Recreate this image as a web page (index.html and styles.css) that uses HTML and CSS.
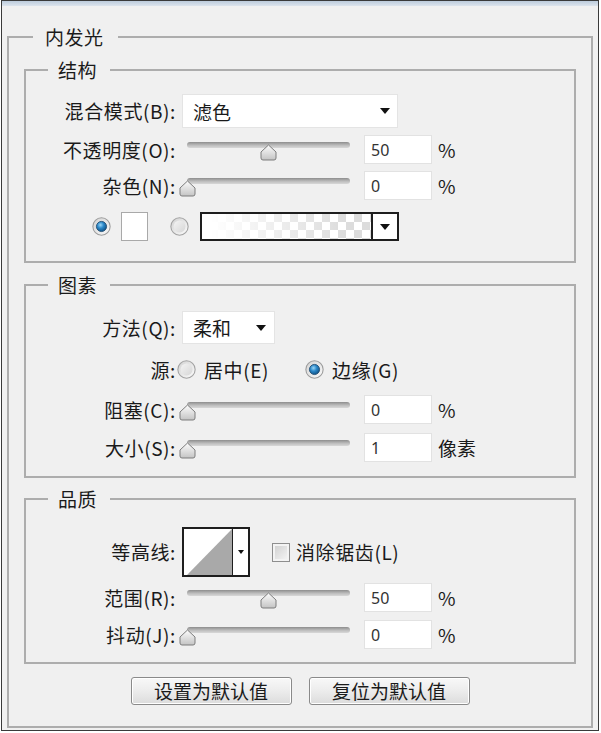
FILE: index.html
```html
<!DOCTYPE html>
<html lang="zh-CN">
<head>
    <meta charset="UTF-8">
    <meta name="viewport" content="width=device-width, initial-scale=1.0">
    <title>内发光</title>
    <link rel="stylesheet" href="styles.css">
</head>
<body>
    <div class="window">
        <div class="title-strip"></div>

        <fieldset class="group outer">
            <legend>内发光</legend>

            <fieldset class="group section structure">
                <legend>结构</legend>
                <div class="rows">
                    <div class="row row-select">
                        <label>混合模式(B):</label>
                        <div class="select select-wide"><span>滤色</span><i class="arrow"></i></div>
                    </div>
                    <div class="row">
                        <label>不透明度(O):</label>
                        <div class="control">
                            <div class="slider"><div class="track"><svg class="thumb" style="left: 50%"><use href="#thumb"/></svg></div></div>
                            <input class="num" type="text" value="50">
                            <span class="unit">%</span>
                        </div>
                    </div>
                    <div class="row">
                        <label>杂色(N):</label>
                        <div class="control">
                            <div class="slider"><div class="track"><svg class="thumb" style="left: 0%"><use href="#thumb"/></svg></div></div>
                            <input class="num" type="text" value="0">
                            <span class="unit">%</span>
                        </div>
                    </div>
                    <div class="swatches">
                        <svg class="radio"><use href="#radio-on"/></svg>
                        <span class="swatch"></span>
                        <svg class="radio radio-gap"><use href="#radio-off"/></svg>
                        <div class="gradient-pick">
                            <span class="gradient"></span>
                            <span class="pick-arrow"><i class="arrow"></i></span>
                        </div>
                    </div>
                </div>
            </fieldset>

            <fieldset class="group section elements">
                <legend>图素</legend>
                <div class="rows">
                    <div class="row row-select">
                        <label>方法(Q):</label>
                        <div class="select select-short"><span>柔和</span><i class="arrow"></i></div>
                    </div>
                    <div class="row row-source">
                        <label>源:</label>
                        <div class="choices">
                            <svg class="radio"><use href="#radio-off"/></svg>
                            <span>居中(E)</span>
                            <svg class="radio radio-far"><use href="#radio-on"/></svg>
                            <span>边缘(G)</span>
                        </div>
                    </div>
                    <div class="row">
                        <label>阻塞(C):</label>
                        <div class="control">
                            <div class="slider"><div class="track"><svg class="thumb" style="left: 0%"><use href="#thumb"/></svg></div></div>
                            <input class="num" type="text" value="0">
                            <span class="unit">%</span>
                        </div>
                    </div>
                    <div class="row">
                        <label>大小(S):</label>
                        <div class="control">
                            <div class="slider"><div class="track"><svg class="thumb" style="left: 0.4%"><use href="#thumb"/></svg></div></div>
                            <input class="num" type="text" value="1">
                            <span class="unit">像素</span>
                        </div>
                    </div>
                </div>
            </fieldset>

            <fieldset class="group section quality">
                <legend>品质</legend>
                <div class="rows">
                    <div class="row row-contour">
                        <label>等高线:</label>
                        <div class="control">
                            <div class="contour">
                                <svg class="curve" viewBox="0 0 48 46"><polygon points="3,46 48,0 48,46" fill="#a9a9a9"/></svg>
                                <span class="contour-arrow"><i class="arrow small"></i></span>
                            </div>
                            <span class="check"></span>
                            <span class="check-label">消除锯齿(L)</span>
                        </div>
                    </div>
                    <div class="row">
                        <label>范围(R):</label>
                        <div class="control">
                            <div class="slider"><div class="track"><svg class="thumb" style="left: 50%"><use href="#thumb"/></svg></div></div>
                            <input class="num" type="text" value="50">
                            <span class="unit">%</span>
                        </div>
                    </div>
                    <div class="row">
                        <label>抖动(J):</label>
                        <div class="control">
                            <div class="slider"><div class="track"><svg class="thumb" style="left: 0%"><use href="#thumb"/></svg></div></div>
                            <input class="num" type="text" value="0">
                            <span class="unit">%</span>
                        </div>
                    </div>
                </div>
            </fieldset>

            <div class="buttons">
                <button class="btn">设置为默认值</button>
                <button class="btn">复位为默认值</button>
            </div>
        </fieldset>

        <svg class="defs" width="0" height="0">
            <defs>
                <linearGradient id="thumb-fill" x1="0" y1="0" x2="0" y2="1">
                    <stop offset="0" stop-color="#fdfdfd"/>
                    <stop offset="1" stop-color="#c4c4c4"/>
                </linearGradient>
                <linearGradient id="ring-fill" x1="0" y1="0" x2="1" y2="1">
                    <stop offset="0" stop-color="#d2d2d2"/>
                    <stop offset="1" stop-color="#fbfbfb"/>
                </linearGradient>
                <linearGradient id="hole-fill" x1="0" y1="0" x2="1" y2="1">
                    <stop offset="0" stop-color="#f4f4f4"/>
                    <stop offset="1" stop-color="#d6d6d6"/>
                </linearGradient>
                <radialGradient id="dot-fill" cx="0.4" cy="0.35" r="0.7">
                    <stop offset="0" stop-color="#9ad6f6"/>
                    <stop offset="0.45" stop-color="#2b88c9"/>
                    <stop offset="1" stop-color="#0e4d80"/>
                </radialGradient>
                <symbol id="thumb" viewBox="0 0 17 17">
                    <path d="M8.5 1 L16 8 V14 Q16 16 14 16 H3 Q1 16 1 14 V8 Z" fill="url(#thumb-fill)" stroke="#7d7d7d"/>
                </symbol>
                <symbol id="radio-on" viewBox="0 0 18 18">
                    <circle cx="9" cy="9" r="8.2" fill="url(#ring-fill)" stroke="#9c9c9c"/>
                    <circle cx="9" cy="9" r="4.8" fill="url(#dot-fill)" stroke="#1d4a70" stroke-width="0.8"/>
                </symbol>
                <symbol id="radio-off" viewBox="0 0 18 18">
                    <circle cx="9" cy="9" r="8.2" fill="url(#ring-fill)" stroke="#a2a2a2"/>
                    <circle cx="9" cy="9" r="5.6" fill="url(#hole-fill)"/>
                </symbol>
            </defs>
        </svg>
    </div>
</body>
</html>
```

FILE: styles.css
```css
* {
    box-sizing: border-box;
}

body {
    margin: 0;
    background: #ffffff;
    font-family: "Noto Sans CJK SC", "Noto Sans", sans-serif;
    font-size: 19px;
    color: #1a1a1a;
}

.window {
    width: 598px;
    height: 731px;
    margin-left: 1px;
    border: 1px solid #3a3a3a;
    background: #f0f0f0;
}

.title-strip {
    height: 5px;
    background: linear-gradient(#bccbdb, #dce4ed);
}

/* group boxes */
.group {
    margin: 0;
    padding: 0;
    border: 2px solid #adadad;
    min-width: 0;
}

.group > legend {
    font-size: 19px;
    line-height: 20px;
    letter-spacing: 0.5px;
    padding: 0 13px 0 10px;
    margin-left: 22px;
}

.outer {
    margin: 21px 5px 0;
    padding: 13px 15px 21px;
}

.outer > legend {
    margin-left: 9px;
    padding: 0 14px 0 12px;
}

.rows {
    display: flex;
    flex-direction: column;
}

.structure .rows {
    gap: 7px;
    padding: 14px 0 20px;
}

.elements {
    margin-top: 12px;
}

.elements .rows {
    gap: 9px;
    padding: 16px 0 14px;
}

.quality {
    margin-top: 11px;
}

.quality .rows {
    gap: 8px;
    padding: 18px 0 13px;
}

/* label + control rows */
.row {
    display: grid;
    grid-template-columns: 150px 1fr;
    column-gap: 6px;
    align-items: center;
    height: 29px;
}

.row > label {
    text-align: right;
    white-space: nowrap;
    line-height: 20px;
    letter-spacing: 0.6px;
}

.row-select {
    height: 34px;
}

.elements .row-select {
    height: 33px;
}

.row-source {
    height: 33px;
}

.row-contour {
    height: 48px;
}

.control {
    display: flex;
    align-items: center;
    height: 100%;
}

/* dropdowns */
.select {
    display: flex;
    align-items: center;
    justify-content: space-between;
    height: 100%;
    padding: 0 7px 0 10px;
    background: #ffffff;
    border: 1px solid #e4e4e4;
}

.select-wide {
    width: 216px;
}

.select-short {
    width: 93px;
    padding-right: 8px;
}

.arrow {
    display: block;
    width: 0;
    height: 0;
    border-left: 5px solid transparent;
    border-right: 5px solid transparent;
    border-top: 6px solid #111;
}

.arrow.small {
    border-left-width: 3.5px;
    border-right-width: 3.5px;
    border-top-width: 4px;
}

/* sliders */
.slider {
    width: 168px;
    height: 100%;
    padding: 7px 0 0 5px;
    margin-right: 14px;
}

.track {
    position: relative;
    height: 6px;
    border-radius: 3px;
    background: linear-gradient(#8d8d8d, #bdbdbd 55%, #d8d8d8);
}

.thumb {
    position: absolute;
    top: 2px;
    width: 17px;
    height: 17px;
    margin-left: -8.5px;
}

.num {
    width: 68px;
    height: 29px;
    margin: 0;
    padding: 0 6px;
    border: 1px solid #e2e2e2;
    background: #ffffff;
    font-family: "Noto Sans", sans-serif;
    font-size: 16px;
    color: #333;
    outline: none;
}

.unit {
    margin-left: 6px;
    font-size: 19px;
    line-height: 20px;
}

/* colour row */
.swatches {
    display: flex;
    align-items: center;
    height: 29px;
    margin-top: 5px;
    padding-left: 66px;
}

.radio {
    width: 19px;
    height: 19px;
    flex: none;
}

.swatch {
    width: 27px;
    height: 29px;
    margin-left: 10px;
    background: #ffffff;
    border: 1px solid #a9a9a9;
}

.radio-gap {
    margin-left: 22px;
}

.gradient-pick {
    display: flex;
    width: 199px;
    height: 29px;
    margin-left: 11px;
    border: 2px solid #1e1e1e;
    background: #ffffff;
}

.gradient {
    flex: 1;
    background:
        linear-gradient(to right, #ffffff 5%, rgba(255, 255, 255, 0.15) 85%),
        repeating-conic-gradient(#d6d6d6 0 25%, #ffffff 0 50%) 0 0 / 16px 16px;
}

.pick-arrow {
    display: flex;
    align-items: center;
    justify-content: center;
    width: 26px;
    border-left: 2px solid #1e1e1e;
}

/* radio choice row */
.choices {
    display: flex;
    align-items: center;
    margin-left: -5px;
    line-height: 20px;
}

.choices span {
    margin-left: 8px;
    letter-spacing: 0.6px;
}

.radio-far {
    margin-left: 36px;
}

/* contour */
.contour {
    display: flex;
    width: 68px;
    height: 50px;
    border: 2px solid #1e1e1e;
    background: #ffffff;
}

.curve {
    width: 48px;
    height: 46px;
}

.contour-arrow {
    display: flex;
    align-items: center;
    justify-content: center;
    flex: 1;
    border-left: 1px solid #1e1e1e;
}

.check {
    width: 18px;
    height: 19px;
    margin-left: 22px;
    border: 1px solid #8e8e8e;
    background: linear-gradient(135deg, #cdcdcd, #f7f7f7);
    box-shadow: inset 0 0 0 2px #f3f3f3;
}

.check-label {
    margin-left: 6px;
    line-height: 20px;
    letter-spacing: 0.6px;
}

/* buttons */
.buttons {
    display: flex;
    justify-content: center;
    gap: 17px;
    margin-top: 13px;
}

.btn {
    width: 161px;
    height: 28px;
    padding: 0;
    border: 1px solid #8a8a8a;
    border-radius: 3px;
    background: linear-gradient(#f8f8f8, #ececec 50%, #dcdcdc);
    box-shadow: inset 0 0 0 1px #ffffff;
    font-family: "Noto Sans CJK SC", sans-serif;
    font-size: 19px;
    line-height: 26px;
    color: #1a1a1a;
}

.defs {
    display: block;
}
```
